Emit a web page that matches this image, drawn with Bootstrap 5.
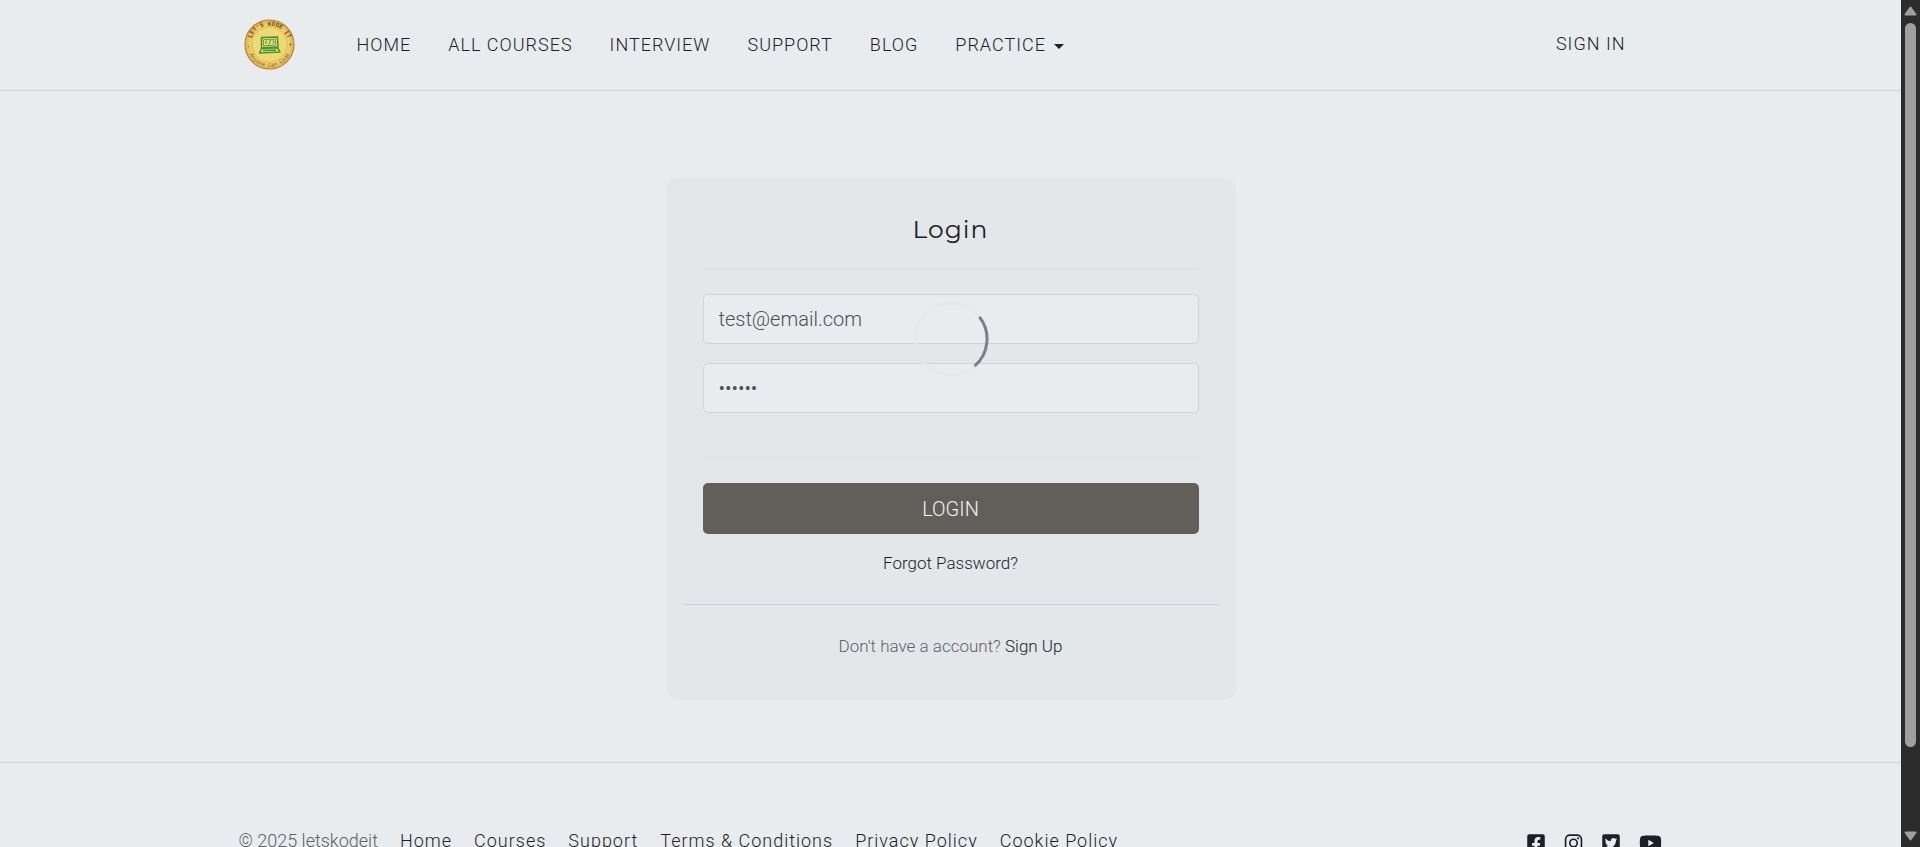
<!DOCTYPE html>
<html lang="en">
<head>
<meta charset="utf-8">
<meta name="viewport" content="width=device-width, initial-scale=1">
<title>Login</title>
<link href="https://cdn.jsdelivr.net/npm/bootstrap@5.3.0/dist/css/bootstrap.min.css" rel="stylesheet">
<style>
  :root { --ink: #1c1f23; --line: #d1d5d8; --page: #e8ecef; --panel: #e3e7ea; }
  body { font-family: Roboto, "Liberation Sans", sans-serif; font-weight: 300; font-size: 17px; background: var(--page); color: #5f6265; }
  a { color: var(--ink); text-decoration: none; }
  a:hover { color: #000; }
  .viewport-pane { min-width: 0; }
  .site-header { border-bottom: 1px solid var(--line); height: 91px; padding-bottom: 2px; flex-shrink: 0; }
  .wrap { max-width: 1424px; }
  .brand { margin: 0 62px 0 5px; }
  .menu { gap: 37px; font-size: 18px; letter-spacing: 1px; }
  .menu .nav-link { padding: 0; color: var(--ink); }
  .menu .dropdown-toggle::after { margin-left: 8px; vertical-align: 2px; }
  .signin { font-size: 18px; letter-spacing: 1px; margin-right: 37px; padding-bottom: 2px; }
  .site-main { padding: 87px 16px 62px; }
  .login-card { max-width: 570px; background: var(--panel); border-radius: 12px; padding: 35px 18px 41px; }
  .login-form { padding: 0 19px; }
  .login-title { font-family: Montserrat, Inter, sans-serif; font-size: 25px; font-weight: 400; letter-spacing: 1px; line-height: 32px; color: var(--ink); margin: 0 0 23px; }
  .rule { border: 0; border-top: 1px solid #d9dde0; opacity: 1; margin: 0 0 25px; }
  .rule-wide { border-top-color: #c5d1da; margin: 28px 0 28px; }
  .login-form .form-control { height: 50px; padding: 6px 15px; font-size: 20px; font-weight: 300; color: #4a5055; background: var(--page); border: 1px solid var(--line); border-radius: 5px; margin-bottom: 19px; }
  .login-form .form-control.last { margin-bottom: 44px; }
  .btn-login { height: 51px; background: #625f5a; color: #f0f2f4; font-size: 20px; font-weight: 300; border: 0; border-radius: 5px; margin-bottom: 16px; }
  .btn-login:hover { background: #524f4b; color: #fff; }
  .line { line-height: 26px; }
  .site-footer { border-top: 1px solid var(--line); padding-top: 65px; flex-shrink: 0; }
  .foot-links { gap: 22px; font-size: 18px; line-height: 26px; }
  .foot-links a { letter-spacing: 1px; }
  .social { gap: 19px; padding-top: 5px; padding-right: 1px; }
  .social a { line-height: 1; }
  .spin { position: absolute; top: 40%; left: 50%; transform: translate(-50%, -50%); pointer-events: none; }
  .scroll-track { width: 19px; background: #2c2c2c; padding: 6px 0; flex-shrink: 0; }
  .scroll-thumb { width: 11px; height: 86.7%; background: #9f9f9f; border-radius: 6px; margin-top: 7px; }
</style>
</head>
<body>
<div class="d-flex vh-100 overflow-hidden">
  <div class="viewport-pane flex-grow-1 position-relative overflow-hidden d-flex flex-column">
    <header class="site-header d-flex align-items-center">
      <nav class="wrap w-100 mx-auto d-flex align-items-center" aria-label="Main">
        <a class="brand" href="#" aria-label="Let's Kode It">
          <svg width="51" height="51" viewBox="0 0 51 51" class="d-block">
            <defs>
              <radialGradient id="gold"><stop offset="0" stop-color="#f3dd80"/><stop offset=".8" stop-color="#eccf6c"/><stop offset="1" stop-color="#dfb04e"/></radialGradient>
              <path id="arcTop" d="M6.500 25.500a19 19 0 0 1 38 0"/>
              <path id="arcBottom" d="M3 25.500a22.500 22.500 0 0 0 45 0"/>
            </defs>
            <circle cx="25.500" cy="25.500" r="24.500" fill="url(#gold)" stroke="#b98739" stroke-width="1.200"/>
            <circle cx="25.500" cy="25.500" r="17.500" fill="#f1d972" stroke="#cfa650" stroke-width=".6"/>
            <text font-family="DejaVu Sans Mono, monospace" font-size="6" font-weight="700" fill="#75511f" text-anchor="middle"><textPath href="#arcTop" startOffset="50%">LET'S KODE IT</textPath></text>
            <text font-family="DejaVu Sans Mono, monospace" font-size="5.500" fill="#946a2b" text-anchor="middle"><textPath href="#arcBottom" startOffset="50%">Anyone Can Code</textPath></text>
            <circle cx="4.500" cy="27.500" r=".8" fill="#a27735"/><circle cx="46.500" cy="25.500" r="1" fill="#75511f"/>
            <g fill="none" stroke="#3f963a" stroke-width="1.500" stroke-linejoin="round">
              <path d="M17.500 18.500l16-.5.500 10-16.500.8z"/>
              <path d="M19.500 20.500l12-.3.300 6-12.300.5z" stroke-width=".8"/>
              <path d="M17.500 29.500l-2 4.500 20.500-1-2.500-4.300zM19 31.500l13-.6"/>
              <path d="M23 21.500l-2 1.700 2 1.500M28.500 21.300l2 1.700-2 1.500M26.500 21l-1.500 4.500" stroke-width="1"/>
            </g>
          </svg>
        </a>
        <ul class="menu nav flex-nowrap text-nowrap">
          <li><a class="nav-link" href="#">HOME</a></li>
          <li><a class="nav-link" href="#">ALL COURSES</a></li>
          <li><a class="nav-link" href="#">INTERVIEW</a></li>
          <li><a class="nav-link" href="#">SUPPORT</a></li>
          <li><a class="nav-link" href="#">BLOG</a></li>
          <li class="dropdown"><a class="nav-link dropdown-toggle" href="#" role="button" data-bs-toggle="dropdown" aria-expanded="false">PRACTICE</a></li>
        </ul>
        <a class="signin ms-auto text-nowrap" href="#">SIGN IN</a>
      </nav>
    </header>

    <main class="site-main">
      <section class="login-card w-100 mx-auto text-center">
        <form class="login-form">
          <h1 class="login-title">Login</h1>
          <hr class="rule">
          <input class="form-control" type="email" aria-label="Email address" value="test@email.com">
          <input class="form-control last" type="password" aria-label="Password" value="secret">
          <hr class="rule">
          <button class="btn btn-login w-100 d-block" type="button">LOGIN</button>
          <div class="line"><a href="#">Forgot Password?</a></div>
        </form>
        <hr class="rule rule-wide">
        <div class="line">Don't have a account? <a href="#">Sign Up</a></div>
      </section>
    </main>

    <footer class="site-footer">
      <div class="wrap w-100 mx-auto d-flex justify-content-between align-items-start">
        <div class="foot-links d-flex text-nowrap">
          <span>© 2025 letskodeit</span>
          <a href="#">Home</a>
          <a href="#">Courses</a>
          <a href="#">Support</a>
          <a href="#">Terms &amp; Conditions</a>
          <a href="#">Privacy Policy</a>
          <a href="#">Cookie Policy</a>
        </div>
        <div class="social d-flex">
          <a href="#" aria-label="Facebook"><svg width="18" height="20" viewBox="0 0 448 512" fill="currentColor"><path d="M400 32H48A48 48 0 0 0 0 80v352a48 48 0 0 0 48 48h137.250V327.690h-63V256h63v-54.640c0-62.150 37-96.480 93.670-96.480 27.140 0 55.520 4.840 55.520 4.840v61h-31.270c-30.810 0-40.420 19.120-40.420 38.730V256h68.780l-11 71.690h-57.780V480H400a48 48 0 0 0 48-48V80a48 48 0 0 0-48-48z"/></svg></a>
          <a href="#" aria-label="Instagram"><svg width="19" height="20" viewBox="0 0 448 512" fill="none" stroke="currentColor" stroke-width="42"><rect x="21" y="53" width="406" height="406" rx="110"/><circle cx="224" cy="256" r="95"/><circle cx="343" cy="137" r="27" fill="currentColor" stroke="none"/></svg></a>
          <a href="#" aria-label="Twitter"><svg width="18" height="20" viewBox="0 0 448 512" fill="currentColor"><path d="M400 32H48C21.500 32 0 53.500 0 80v352c0 26.500 21.500 48 48 48h352c26.500 0 48-21.500 48-48V80c0-26.500-21.500-48-48-48zm-48.900 158.800c.2 2.800.2 5.700.2 8.500 0 86.700-66 186.600-186.600 186.600-37.200 0-71.700-10.800-100.700-29.400 5.300.6 10.400.8 15.800.8 30.700 0 58.900-10.400 81.400-28-28.800-.6-53-19.500-61.300-45.500 10.100 1.500 19.200 1.500 29.600-1.200-30-6.100-52.500-32.500-52.500-64.400v-.8c8.700 4.900 18.900 7.900 29.600 8.300a65.447 65.447 0 0 1-29.200-54.600c0-12.200 3.200-23.400 8.900-33.100 32.300 39.800 80.800 65.800 135.200 68.600-9.300-44.500 24-80.600 64-80.600 18.900 0 35.900 7.900 47.900 20.700 14.800-2.800 29-8.300 41.600-15.800-4.900 15.200-15.200 28-28.800 36.100 13.200-1.400 26-5.100 37.800-10.200-8.900 13.100-20.100 24.700-32.900 34z"/></svg></a>
          <a href="#" aria-label="YouTube"><svg width="23" height="20" viewBox="0 0 576 512" fill="currentColor"><path d="M549.655 124.083c-6.281-23.650-24.787-42.276-48.284-48.597C458.781 64 288 64 288 64S117.220 64 74.629 75.486c-23.497 6.322-42.003 24.947-48.284 48.597-11.412 42.867-11.412 132.305-11.412 132.305s0 89.438 11.412 132.305c6.281 23.650 24.787 41.500 48.284 47.821C117.220 448 288 448 288 448s170.780 0 213.371-11.486c23.497-6.321 42.003-24.171 48.284-47.821 11.412-42.867 11.412-132.305 11.412-132.305s0-89.438-11.412-132.305zm-317.510 213.508V175.185l142.739 81.205-142.739 81.201z"/></svg></a>
        </div>
      </div>
    </footer>

    <!-- Loading indicator over the form -->
    <svg class="spin" width="76" height="76" viewBox="-38 -38 76 76" fill="none" stroke-width="3" role="img" aria-label="Loading">
      <circle r="36" stroke="#e6e8e9"/>
      <path d="M28.400-22.200A36 36 0 0 1 23.600 27.200" stroke="#7b7f87"/>
    </svg>
  </div>

  <div class="scroll-track d-flex flex-column align-items-center" aria-hidden="true">
    <svg width="13" height="10" viewBox="0 0 13 10" class="flex-shrink-0"><path d="M6.500 1.500L11.500 8.500H1.500z" fill="#9f9f9f" stroke="#9f9f9f" stroke-width="2" stroke-linejoin="round"/></svg>
    <div class="scroll-thumb"></div>
    <svg width="13" height="10" viewBox="0 0 13 10" class="flex-shrink-0 mt-auto"><path d="M6.500 8.500L11.500 1.500H1.500z" fill="#9f9f9f" stroke="#9f9f9f" stroke-width="2" stroke-linejoin="round"/></svg>
  </div>
</div>
<script src="https://cdn.jsdelivr.net/npm/bootstrap@5.3.0/dist/js/bootstrap.bundle.min.js"></script>
</body>
</html>
